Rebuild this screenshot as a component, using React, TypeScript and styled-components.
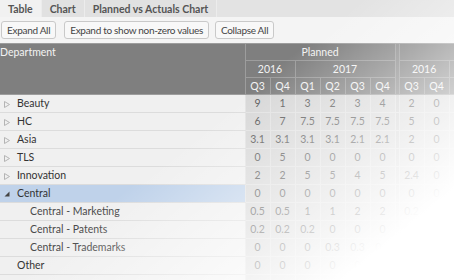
import React from 'react';
import styled, { createGlobalStyle } from 'styled-components';

const GlobalStyle = createGlobalStyle`
  html, body {
    margin: 0;
    padding: 0;
    background: #ffffff;
  }
  body {
    font-family: Lato, "Noto Sans", sans-serif;
  }
`;

const Page = styled.div`
  position: relative;
  width: 454px;
  height: 280px;
  overflow: hidden;
  background: #f2f2f2;
`;

// white wash over the lower right, as in the screenshot
const Fade = styled.div`
  position: absolute;
  inset: 0;
  pointer-events: none;
  background: linear-gradient(141deg, rgba(255, 255, 255, 0) 45%, rgba(255, 255, 255, 1) 86%);
`;

const TabBar = styled.div`
  display: flex;
  height: 17px;
  background: #e3e3e3;
`;

const Tab = styled.div<{ active?: boolean }>`
  display: flex;
  align-items: center;
  padding: 0 8px;
  font-size: 10.5px;
  font-weight: 700;
  color: #555;
  background: ${p => (p.active ? '#f1f1f1' : '#e1e1e1')};
  border-right: 1px solid #ececec;
`;

const Toolbar = styled.div`
  display: flex;
  align-items: center;
  gap: 6px;
  height: 26px;
  padding: 0 1px;
  background: #f4f4f4;
  box-sizing: border-box;
`;

const Button = styled.button`
  height: 18px;
  padding: 0 5px;
  font-family: inherit;
  font-size: 10px;
  letter-spacing: -0.3px;
  color: #444;
  background: #f8f8f8;
  border: 1px solid #c9c9c9;
  border-radius: 3px;
  &:first-child {
    margin-right: 2px;
  }
`;

const Table = styled.table`
  width: 499px;
  border-collapse: collapse;
  table-layout: fixed;
  font-size: 10.5px;
  line-height: 13px;
`;

const HeadRow = styled.tr`
  height: 17px;
`;

const HeadCell = styled.th<{ sep?: boolean }>`
  padding: 0;
  font-weight: 400;
  color: #f3f3f3;
  background: ${p => (p.sep ? '#868686' : '#7f7f7f')};
  border: 1px solid #9d9d9d;
  text-align: center;
  white-space: nowrap;
  overflow: hidden;
`;

const DeptHead = styled(HeadCell)`
  text-align: left;
  vertical-align: top;
  padding-top: 2px;
  border-left: none;
`;

const Row = styled.tr`
  height: 18px;
`;

const DeptCell = styled.td<{ selected?: boolean; level: number }>`
  padding: 0 0 0 ${p => 4 + p.level * 13}px;
  color: ${p => (p.level > 1 ? '#4a4a4a' : '#333')};
  background: ${p => (p.selected ? '#bfd2ea' : '#f0f0f0')};
  border-bottom: 1px solid #dcdcdc;
  white-space: nowrap;
`;

const Toggle = styled.span`
  display: inline-block;
  width: 13px;
  vertical-align: middle;
  line-height: 0;
`;

const NumCell = styled.td<{ sep?: boolean }>`
  padding: 0;
  text-align: center;
  color: #555;
  background: ${p => (p.sep ? '#d0d0d0' : '#d7d7d7')};
  border: 1px solid #e2e2e2;
  border-top: none;
`;

const Closed = () => (
  <svg width="6" height="7" viewBox="0 0 6 7">
    <polygon points="0.5,0.5 5.5,3.5 0.5,6.5" fill="none" stroke="#b4b4b4" strokeWidth="1" />
  </svg>
);

const Open = () => (
  <svg width="6" height="6" viewBox="0 0 6 6">
    <polygon points="5.5,0.5 5.5,5.5 0.5,5.5" fill="#444" />
  </svg>
);

type Dept = { name: string; level: number; toggle?: 'closed' | 'open'; planned: string[]; actual: string[] };

const rows: Dept[] = [
  { name: 'Beauty', level: 0, toggle: 'closed', planned: ['9', '1', '3', '2', '3', '4'], actual: ['2', '0'] },
  { name: 'HC', level: 0, toggle: 'closed', planned: ['6', '7', '7.5', '7.5', '7.5', '7.5'], actual: ['5', '0'] },
  { name: 'Asia', level: 0, toggle: 'closed', planned: ['3.1', '3.1', '3.1', '3.1', '2.1', '2.1'], actual: ['2', '0'] },
  { name: 'TLS', level: 0, toggle: 'closed', planned: ['0', '5', '0', '0', '0', '0'], actual: ['0', '0'] },
  { name: 'Innovation', level: 0, toggle: 'closed', planned: ['2', '2', '5', '5', '4', '5'], actual: ['2.4', '0'] },
  { name: 'Central', level: 0, toggle: 'open', planned: ['0', '0', '0', '0', '0', '0'], actual: ['0', '0'] },
  { name: 'Central - Marketing', level: 2, planned: ['0.5', '0.5', '1', '1', '2', '2'], actual: ['0.2', '0'] },
  { name: 'Central - Patents', level: 2, planned: ['0.2', '0.2', '0.2', '0', '0', '0'], actual: ['0.2', '0'] },
  { name: 'Central - Trademarks', level: 2, planned: ['0', '0', '0', '0.3', '0.3', '0.1'], actual: ['0', '0'] },
  { name: 'Other', level: 1, planned: ['0', '0', '0', '0', '0', '0'], actual: ['0', '0'] },
  { name: '', level: 1, planned: ['', '', '', '', '', ''], actual: ['', ''] },
];

const quarters = ['Q3', 'Q4', 'Q1', 'Q2', 'Q3', 'Q4'];

const App = () => (
  <Page>
    <GlobalStyle />
    <TabBar>
      <Tab active>Table</Tab>
      <Tab>Chart</Tab>
      <Tab>Planned vs Actuals Chart</Tab>
    </TabBar>
    <Toolbar>
      <Button>Expand All</Button>
      <Button>Expand to show non-zero values</Button>
      <Button>Collapse All</Button>
    </Toolbar>
    <Table>
      <colgroup>
        <col style={{ width: 245 }} />
        {quarters.map((_, i) => <col key={i} style={{ width: 25 }} />)}
        <col style={{ width: 4 }} />
        {[0, 1, 2, 3].map(i => <col key={i} style={{ width: 25 }} />)}
      </colgroup>
      <thead>
        <HeadRow>
          <DeptHead rowSpan={3}>Department</DeptHead>
          <HeadCell colSpan={6}>Planned</HeadCell>
          <HeadCell sep rowSpan={3} />
          <HeadCell colSpan={4} />
        </HeadRow>
        <HeadRow>
          <HeadCell colSpan={2}>2016</HeadCell>
          <HeadCell colSpan={4}>2017</HeadCell>
          <HeadCell colSpan={2}>2016</HeadCell>
          <HeadCell colSpan={2} />
        </HeadRow>
        <HeadRow>
          {quarters.map((q, i) => <HeadCell key={i}>{q}</HeadCell>)}
          <HeadCell>Q3</HeadCell>
          <HeadCell>Q4</HeadCell>
          <HeadCell />
          <HeadCell />
        </HeadRow>
      </thead>
      <tbody>
        {rows.map((r, ri) => (
          <Row key={ri}>
            <DeptCell level={r.level} selected={r.name === 'Central'}>
              {r.toggle && <Toggle>{r.toggle === 'open' ? <Open /> : <Closed />}</Toggle>}
              {r.name}
            </DeptCell>
            {r.planned.map((v, i) => <NumCell key={i}>{v}</NumCell>)}
            <NumCell sep />
            {r.actual.map((v, i) => <NumCell key={i}>{v}</NumCell>)}
            <NumCell />
            <NumCell />
          </Row>
        ))}
      </tbody>
    </Table>
    <Fade />
  </Page>
);

export default App;
